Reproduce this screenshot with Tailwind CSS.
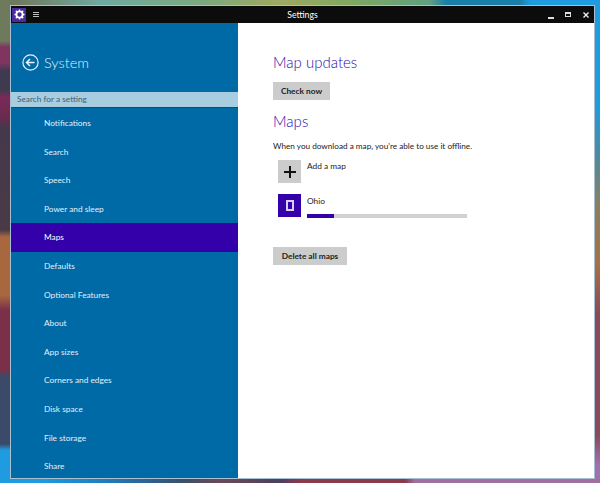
<!doctype html>
<html><head><meta charset="utf-8"><script src="https://cdn.jsdelivr.net/npm/@tailwindcss/browser@4"></script></head>
<body class="m-0 overflow-hidden">
<div class="w-[600px] h-[483px] flex flex-col font-['Lato','Open_Sans',sans-serif]">
<div class="h-[5px] shrink-0 bg-[linear-gradient(90deg,#6f7a5c_0,#6f7a5c_16px,#6fa8a0_100px,#7aa880_200px,#a0a860_280px,#80a860_350px,#60a080_430px,#1a7fa8_446px,#1a7fa8_520px,#1f9be0_530px)]"></div>
<div class="flex h-[474px] shrink-0">
<div class="w-[10px] shrink-0 bg-[linear-gradient(180deg,#6f7a5c_0,#6f7a5c_36px,#7f3560_42px,#7f3560_58px,#3f3a50_66px,#3f3a50_85px,#7a2a58_92px,#6a2a50_112px,#46384c_122px,#4a3a48_225px,#a8683f_232px,#a8683f_290px,#7a3048_305px,#7a3048_365px,#3a4a68_372px,#3a4a68_439px,#1f9be0_445px)]"></div>
<div class="w-[585px] shrink-0 flex flex-col border border-[#a9bfd2]">
<div class="h-[17px] shrink-0 bg-[#0c0c0c] flex items-center text-white">
<div class="w-[14px] h-[14px] ml-px bg-[#4a2a9c] flex items-center justify-center"><svg width="11" height="11" viewBox="0 0 12 12"><circle cx="6" cy="6" r="3.400" fill="none" stroke="#fff" stroke-width="2"/><path d="M6 .5v2M6 9.500v2M.5 6h2M9.500 6h2M2 2l1.500 1.500M8.500 8.500 10 10M10 2 8.500 3.500M3.500 8.500 2 10" stroke="#fff" stroke-width="1.500"/></svg></div>
<div class="ml-[7px] w-[6px] flex flex-col gap-px"><i class="h-px bg-[#bbb]"></i><i class="h-px bg-[#bbb]"></i><i class="h-px bg-[#bbb]"></i></div>
<div class="flex-1 pl-[18px] text-center text-[8.700px] leading-[17px]">Settings</div>
<div class="flex items-center">
<div class="w-[6px] h-[2px] mt-[7px] bg-[#ddd] mr-[11px]"></div>
<div class="w-[6px] h-[5px] border border-t-2 border-[#ddd] mr-[12px]"></div>
<svg width="6" height="6" viewBox="0 0 6 6" class="mr-[5px]"><path d="M.5.500l5 5M5.500.500l-5 5" stroke="#eee" stroke-width="1.400"/></svg>
</div></div>
<div class="flex-1 flex min-h-0">
<div class="w-[227px] shrink-0 bg-[#006aa7] text-[#e0eff8] overflow-hidden">
<div class="h-[69px] flex items-center pl-[11px] pt-[10px]">
<svg width="17" height="17" viewBox="0 0 17 17"><circle cx="8.500" cy="8.500" r="7.600" fill="none" stroke="#e8f2f8" stroke-width="1.200"/><path d="M4.500 8.500h8M8 5 4.500 8.500 8 12" fill="none" stroke="#e8f2f8" stroke-width="1.500"/></svg>
<span class="ml-[5px] text-[14.500px] font-light">System</span></div>
<div class="h-[16px] bg-[#a8cde0] border-b border-[#0a4f7a] text-[8.300px] leading-[15px] pl-[6px] text-[#3f5f72]">Search for a setting</div>
<div class="pt-px text-[8.300px]">
<div class="h-[28.600px] leading-[28.600px] pl-[33px]">Notifications</div>
<div class="h-[28.600px] leading-[28.600px] pl-[33px]">Search</div>
<div class="h-[28.600px] leading-[28.600px] pl-[33px]">Speech</div>
<div class="h-[28.600px] leading-[28.600px] pl-[33px]">Power and sleep</div>
<div class="h-[28.600px] leading-[28.600px] pl-[33px] bg-[#3300aa] text-white">Maps</div>
<div class="h-[28.600px] leading-[28.600px] pl-[33px]">Defaults</div>
<div class="h-[28.600px] leading-[28.600px] pl-[33px]">Optional Features</div>
<div class="h-[28.600px] leading-[28.600px] pl-[33px]">About</div>
<div class="h-[28.600px] leading-[28.600px] pl-[33px]">App sizes</div>
<div class="h-[28.600px] leading-[28.600px] pl-[33px]">Corners and edges</div>
<div class="h-[28.600px] leading-[28.600px] pl-[33px]">Disk space</div>
<div class="h-[28.600px] leading-[28.600px] pl-[33px]">File storage</div>
<div class="h-[28.600px] leading-[28.600px] pl-[33px]">Share</div>
</div></div>
<div class="flex-1 bg-white pl-[35px] text-[#222]">
<div class="pt-[29px] text-[15px] leading-[20px] font-light text-[#2c0ca8]">Map updates</div>
<div class="mt-[10px] w-[57px] h-[18px] bg-[#cccccc] text-[8.300px] font-bold leading-[18px] text-center">Check now</div>
<div class="mt-[11px] text-[15px] leading-[20px] font-light text-[#2c0ca8]">Maps</div>
<div class="mt-[9px] text-[8.200px] leading-[12px]">When you download a map, you're able to use it offline.</div>
<div class="mt-[8px] ml-[5px] flex"><div class="w-[23px] h-[23px] bg-[#ccc] flex items-center justify-center"><svg width="12" height="12" viewBox="0 0 12 12"><path d="M6 0v12M0 6h12" stroke="#111" stroke-width="2"/></svg></div><div class="ml-[6px] text-[8.300px] leading-[12px]">Add a map</div></div>
<div class="mt-[11px] ml-[5px] flex"><div class="w-[23px] h-[23px] bg-[#3300aa] flex items-center justify-center"><div class="w-[8px] h-[11px] border-2 border-[#d8d0f0]"></div></div><div class="ml-[6px] w-[160px]"><div class="text-[8.300px] leading-[12px] pt-px">Ohio</div><div class="mt-[7px] h-[4px] bg-[#d2d2d2]"><div class="h-full w-[27px] bg-[#3300aa]"></div></div></div></div>
<div class="mt-[29px] w-[74px] h-[18px] bg-[#cccccc] text-[8.300px] font-bold leading-[18px] text-center">Delete all maps</div>
</div></div></div>
<div class="w-[5px] shrink-0 bg-[linear-gradient(180deg,#1f9be0_0,#1f9be0_100px,#4f8aa0_150px,#8a8060_200px,#a86f45_260px,#8a4a5a_310px,#8a4a5a_430px,#a070b0_460px)]"></div>
</div>
<div class="h-[4px] shrink-0 bg-[linear-gradient(90deg,#1f9be0_0,#1f9be0_40px,#2080c0_100px,#306090_150px,#3a5068_185px,#6a4a58_220px,#4a4060_280px,#8a3a4a_300px,#8a3a4a_405px,#a070a0_415px)]"></div>
</div>
</body></html>
